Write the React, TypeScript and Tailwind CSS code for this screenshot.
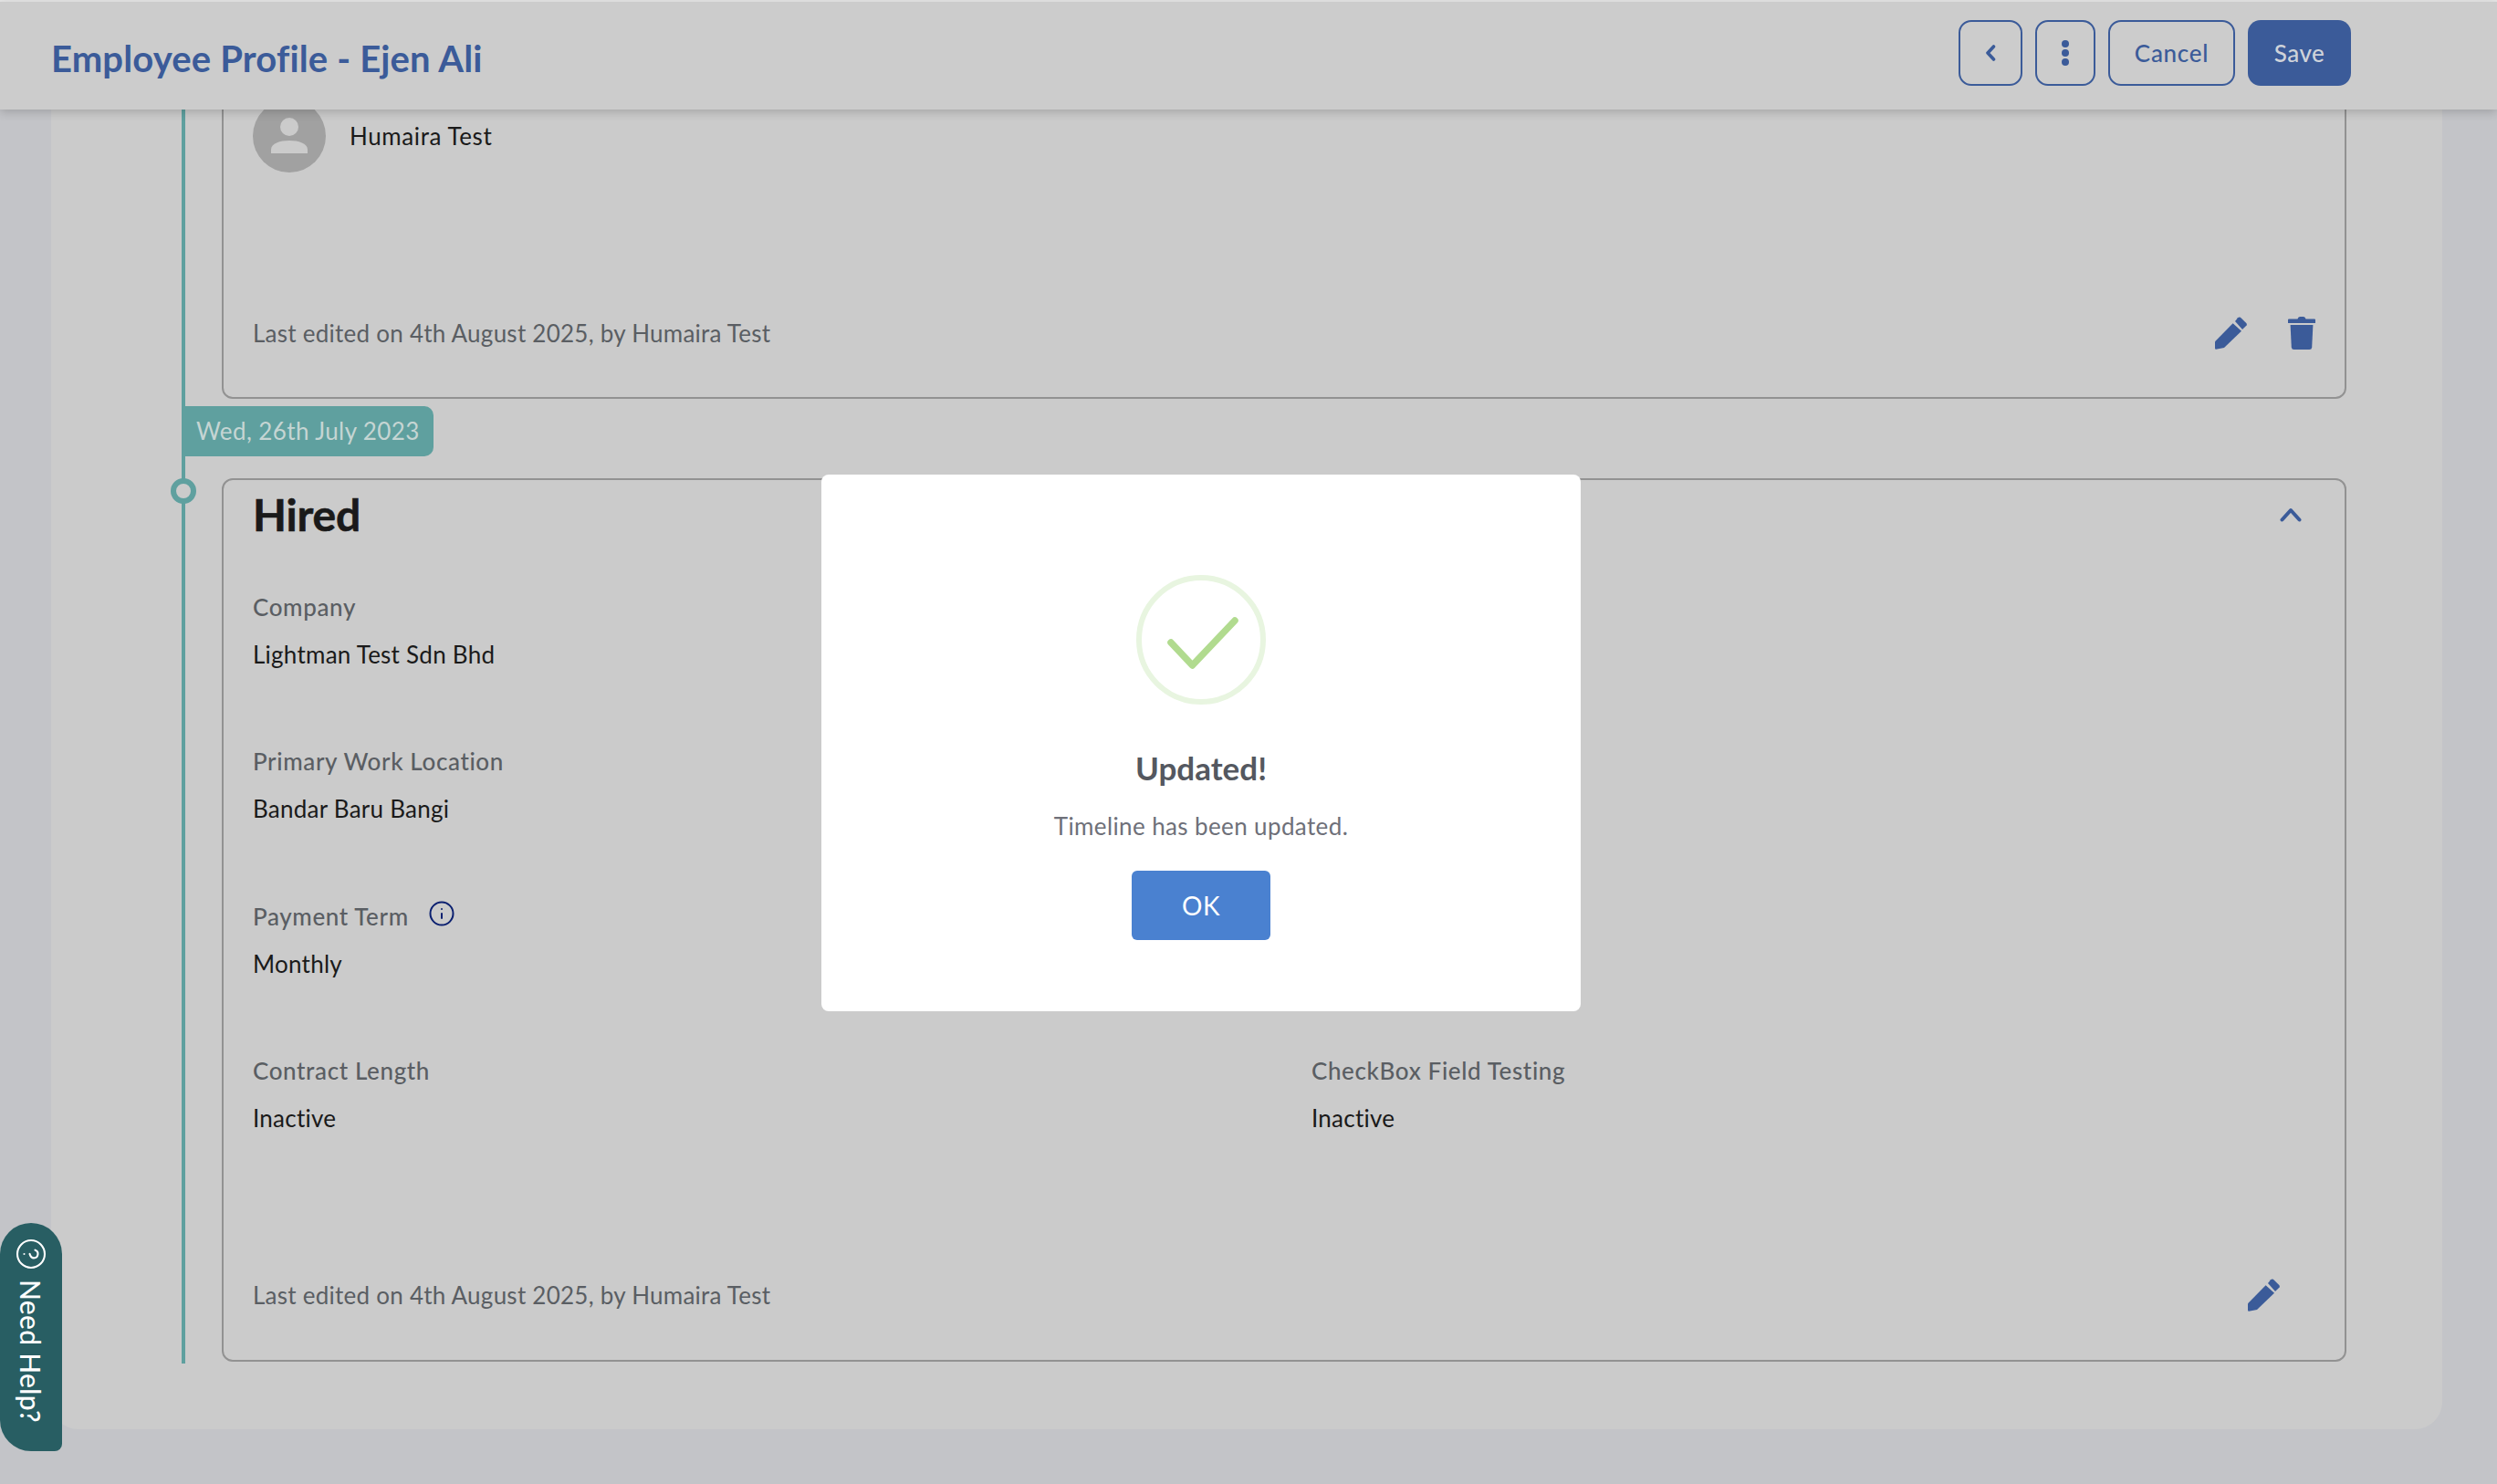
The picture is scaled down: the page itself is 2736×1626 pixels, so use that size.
import React from "react";
import { CircleHelp, Info } from "lucide-react";

const Pencil = ({ className }: { className?: string }) => (
  <svg viewBox="0 0 35 36" className={className} fill="#3b5b99">
    <path d="M0 27.3 19.6 7.3 29 15.7 10 34 1 35.7Q0 35.8 0 34.6Z" />
    <path d="M22 5 25 1.2Q26.4 0 27.9.8L34 6.7Q35.3 8 34.6 9.4L30 14Z" />
  </svg>
);

const Trash = ({ className }: { className?: string }) => (
  <svg viewBox="0 0 30 36" className={className} fill="#3b5b99">
    <path d="M1 2.5H10.5Q11 0 13 0H17Q19 0 19.5 2.5H29Q30 2.5 30 3.5V7H0V3.5Q0 2.5 1 2.5Z" />
    <path d="M2.6 9H27.4L26.2 33.5Q26 36 23.5 36H6.5Q4 36 3.8 33.5Z" />
  </svg>
);

const Field = ({ label, value, info }: { label: string; value: string; info?: boolean }) => (
  <div className="flex h-[169.3px] flex-col">
    <div className="flex h-[36px] items-center text-[26px] font-medium leading-[36px] tracking-[0.62px] text-[#5a5e63]">
      <span>{label}</span>
      {info && <Info className="ml-[21px] -mt-[5px] h-[30px] w-[30px] text-[#0b2070]" strokeWidth={1.6} />}
    </div>
    <div className="mt-[16px] h-[36px] text-[26px] leading-[36px] tracking-[0.25px] text-[#1a1a1a]">{value}</div>
  </div>
);

export default function App() {
  return (
    <div className="relative h-[1626px] w-[2736px] overflow-hidden bg-[#c3c4c8] font-['Lato','Liberation_Sans',sans-serif] tracking-[0.45px]">
      <div className="h-[2px] bg-[#e6e6e6]" />
      <header className="relative z-10 flex h-[118px] items-center justify-between bg-[#cccccc] pl-[56px] pr-[160px] shadow-[0_3px_10px_rgba(0,0,0,0.18)]">
        <h1 className="mt-[6px] text-[40px] font-bold tracking-[0.15px] text-[#3b5b99]">Employee Profile - Ejen Ali</h1>
        <div className="-mt-[6px] flex h-[72px] gap-[14px]">
          <button className="flex w-[70px] items-center justify-center rounded-[14px] border-2 border-[#3b5b99]">
            <svg viewBox="0 0 12 18" className="h-[18px] w-[12px]" fill="none" stroke="#3b5b99" strokeWidth="3.6" strokeLinecap="round" strokeLinejoin="round">
              <path d="M9.5 2 3 9l6.5 7" />
            </svg>
          </button>
          <button className="flex w-[66px] items-center justify-center rounded-[14px] border-2 border-[#3b5b99]">
            <svg viewBox="0 0 8 28" className="h-[28px] w-[8px]" fill="#3b5b99">
              <circle cx="4" cy="4" r="4" />
              <circle cx="4" cy="14" r="4" />
              <circle cx="4" cy="24" r="4" />
            </svg>
          </button>
          <button className="w-[139px] rounded-[14px] border-2 border-[#3b5b99] text-[26px] font-medium tracking-[0.7px] text-[#3b5b99]">Cancel</button>
          <button className="w-[113px] rounded-[14px] bg-[#3b5b99] text-[26px] font-medium text-[#cfd3da]">Save</button>
        </div>
      </header>

      <main className="ml-[56px] h-[1446px] w-[2620px] overflow-hidden rounded-b-[30px] bg-[#cbcbcb] pl-[143px]">
        <div className="relative flex h-[1374px] w-[2372px] flex-col border-l-4 border-[#5fa09f] pl-[40px]">
          <section className="-mt-[40px] flex h-[357px] w-[2328px] shrink-0 flex-col rounded-[12px] border-2 border-[#929292] pl-[32px] pr-[29px]">
            <div className="mt-[27px] flex items-center gap-[26px]">
              <div className="flex h-[80px] w-[80px] items-center justify-center rounded-full bg-[#a1a1a1]">
                <svg viewBox="0 0 40 40" className="h-[40px] w-[40px]" fill="#cbcbcb">
                  <circle cx="20" cy="10" r="10" />
                  <path d="M0 39v-4c0-7 10-10 20-10s20 3 20 10v4Z" />
                </svg>
              </div>
              <span className="text-[26px] tracking-[0.6px] text-[#1a1a1a]">Humaira Test</span>
            </div>
            <div className="mt-[156px] flex items-center justify-between pr-[2px]">
              <span className="mt-[1px] text-[26px] tracking-[0.25px] text-[#5a5e63]">Last edited on 4th August 2025, by Humaira Test</span>
              <div className="flex items-center gap-[45px] pr-[1px]">
                <Pencil className="h-[36px] w-[35px]" />
                <Trash className="h-[36px] w-[30px]" />
              </div>
            </div>
          </section>

          <div className="-ml-[43px] mt-[8px] flex h-[55px] w-[275px] shrink-0 items-center rounded-r-[10px] bg-[#5fa09f] pl-[15px] text-[26px] tracking-[0.4px] text-[#c5d5d3]">
            Wed, 26th July 2023
          </div>

          <div className="absolute -left-[16px] top-[404px] h-[28px] w-[28px] rounded-full border-[6px] border-[#5fa09f] bg-[#cbcbcb]" />

          <section className="relative mt-[24px] flex h-[968px] w-[2328px] shrink-0 flex-col rounded-[12px] border-2 border-[#929292] pl-[32px] pr-[32px]">
            <div className="flex items-start justify-between">
              <h2 className="mt-[6px] text-[48px] font-bold leading-[64px] tracking-[-0.2px] text-[#1a1a1a] [-webkit-text-stroke:0.6px_#1a1a1a]">Hired</h2>
              <svg viewBox="0 0 24 16" className="mr-[15px] mt-[30px] h-[16px] w-[24px]" fill="none" stroke="#3b5b99" strokeWidth="4" strokeLinecap="round" strokeLinejoin="round">
                <path d="M2.5 13.5 12 3l9.5 10.5" />
              </svg>
            </div>
            <div className="mt-[51px] grid grid-cols-[1160px_1fr]">
              <Field label="Company" value="Lightman Test Sdn Bhd" />
              <div />
              <Field label="Primary Work Location" value="Bandar Baru Bangi" />
              <div />
              <Field label="Payment Term" value="Monthly" info />
              <div />
              <Field label="Contract Length" value="Inactive" />
              <Field label="CheckBox Field Testing" value="Inactive" />
            </div>
            <div className="mt-[76px] flex items-center justify-between pr-[39px]">
              <span className="text-[26px] tracking-[0.25px] text-[#5a5e63]">Last edited on 4th August 2025, by Humaira Test</span>
              <Pencil className="-mt-[2px] h-[36px] w-[35px]" />
            </div>
          </section>
        </div>
      </main>

      <button className="absolute left-0 top-[1340px] flex h-[250px] w-[68px] flex-col items-center rounded-tl-[34px] rounded-tr-[34px] rounded-bl-[34px] rounded-br-[8px] bg-[#285e63] pt-[16px] text-white">
        <CircleHelp className="h-[36px] w-[36px] rotate-90" strokeWidth={1.4} />
        <span className="mt-[10px] text-[30px] font-medium leading-[32px] tracking-[0.3px] [writing-mode:vertical-rl]">Need Help?</span>
      </button>

      <div className="absolute left-[900px] top-[520px] z-20 flex h-[588px] w-[832px] flex-col items-center rounded-[8px] bg-white pt-[110px]">
        <div className="relative flex h-[142px] w-[142px] items-center justify-center rounded-full border-[6px] border-[#e8f5e0]">
          <svg viewBox="0 0 142 142" className="absolute -left-[6px] -top-[6px] h-[142px] w-[142px]" fill="none" stroke="#b1db8f" strokeWidth="7.500" strokeLinecap="round" strokeLinejoin="round">
            <path d="M38 74 61.500 99 108 50" />
          </svg>
        </div>
        <h3 className="mt-[46px] text-[35px] font-bold leading-[46px] tracking-normal text-[#545860]">Updated!</h3>
        <p className="mt-[23px] text-[26px] leading-[36px] tracking-[0.38px] text-[#6e7079]">Timeline has been updated.</p>
        <button className="mt-[31px] h-[76px] w-[152px] rounded-[6px] bg-[#4a81d0] text-[28px] text-white">OK</button>
      </div>
    </div>
  );
}
